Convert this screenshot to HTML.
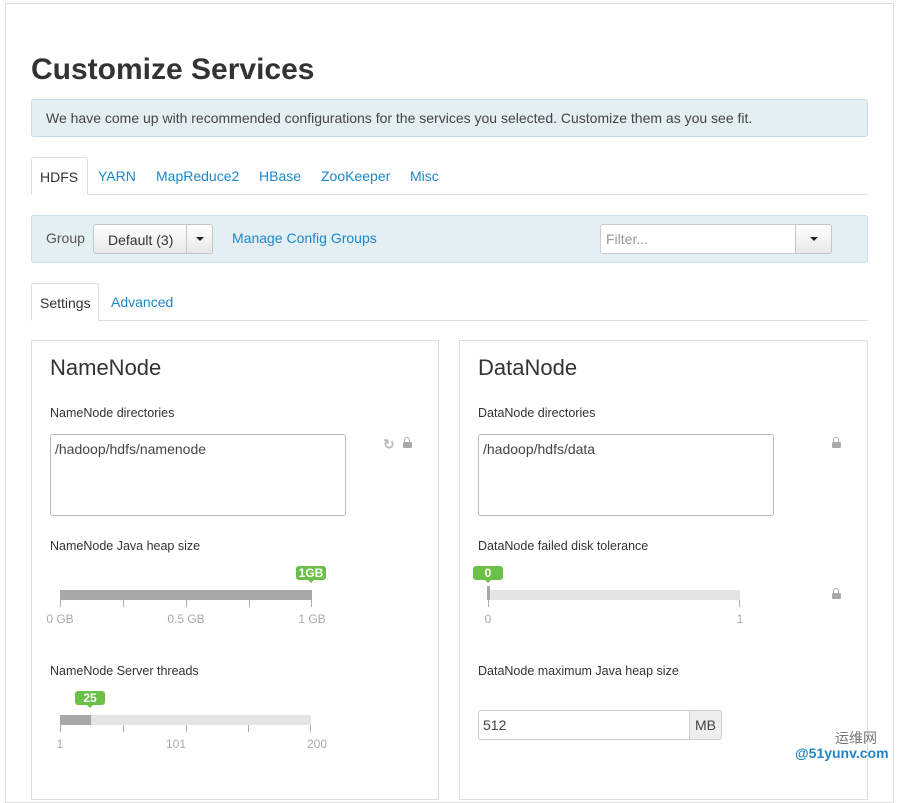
<!DOCTYPE html>
<html><head><meta charset="utf-8"><style>
*{box-sizing:border-box}
body{margin:0;width:900px;height:772px;overflow:hidden;background:#fff;font-family:"Liberation Sans",sans-serif;color:#333;position:relative}
.a{position:absolute;white-space:nowrap}
.frame{left:5px;top:3px;width:889px;height:800px;border:1px solid #ddd}
h1{position:absolute;left:31px;top:53px;margin:0;font-size:30px;font-weight:bold;color:#333}
.alert{left:31px;top:99px;width:837px;height:38px;background:#e4eff4;border:1px solid #c9dde7;border-radius:3px;font-size:14px;color:#444;padding:10px 14px}
.tabs{left:31px;top:194px;width:837px;border-top:1px solid #ddd}
.tab{position:absolute;font-size:14px;color:#1c87c9;white-space:nowrap}
.acttab{position:absolute;border:1px solid #ddd;border-bottom:1px solid #fff;background:#fff;border-radius:3px 3px 0 0;font-size:14px;color:#333}
.bar{left:31px;top:215px;width:837px;height:48px;background:#e4eff4;border:1px solid #cfdfe7;border-radius:3px}
.btn{position:absolute;border:1px solid #c6c6c6;border-radius:3px;background:linear-gradient(#fff,#e8e8e8);font-size:14px;color:#333;white-space:nowrap}
.caret{position:absolute;width:0;height:0;border-left:4px solid transparent;border-right:4px solid transparent;border-top:4px solid #222}
.panel{position:absolute;border:1px solid #ddd;top:340px;height:460px}
.ph{position:absolute;font-size:22px;color:#333}
.lbl{position:absolute;font-size:12.5px;color:#333;white-space:nowrap}
.ta{position:absolute;border:1px solid #bbb;border-radius:3px;width:296px;height:82px;font-size:14px;padding:6px 4px;color:#444}
.track{position:absolute;height:10px;background:#e4e4e4}
.fill{position:absolute;height:10px;background:#a8a8a8}
.tick{position:absolute;width:1px;height:7px;background:#aaa}
.num{position:absolute;font-size:12px;color:#aaa;transform:translateX(-50%)}
.badge{position:absolute;background:#6cbf48;color:#fff;font-size:12px;font-weight:bold;border-radius:3px;height:14px;line-height:14px;text-align:center}
.badge:after{content:"";position:absolute;left:50%;margin-left:-3px;bottom:-3px;border-left:3px solid transparent;border-right:3px solid transparent;border-top:3px solid #6cbf48}
.lock{position:absolute;width:9px;height:6px;background:#aaa;border-radius:1px}
.lock:before{content:"";position:absolute;left:1px;top:-5px;width:4px;height:5px;border:1.5px solid #aaa;border-bottom:none;border-radius:3px 3px 0 0}
</style></head><body>
<div class="a frame"></div>
<h1>Customize Services</h1>
<div class="a alert">We have come up with recommended configurations for the services you selected. Customize them as you see fit.</div>
<div class="a tabs"></div>
<div class="acttab" style="left:31px;top:157px;width:57px;height:38px;padding:11px 8px">HDFS</div>
<div class="tab" style="left:98px;top:168px">YARN</div>
<div class="tab" style="left:156px;top:168px">MapReduce2</div>
<div class="tab" style="left:259px;top:168px">HBase</div>
<div class="tab" style="left:321px;top:168px">ZooKeeper</div>
<div class="tab" style="left:410px;top:168px">Misc</div>
<div class="a bar"></div>
<div class="lbl" style="left:46px;top:230px;font-size:14px;color:#555">Group</div>
<div class="btn" style="left:93px;top:224px;width:94px;height:30px;padding:7px 0 0 14px;border-radius:3px 0 0 3px">Default (3)</div>
<div class="btn" style="left:186px;top:224px;width:27px;height:30px;border-radius:0 3px 3px 0"><div class="caret" style="left:9px;top:12px"></div></div>
<div class="tab" style="left:232px;top:230px">Manage Config Groups</div>
<div class="a" style="left:600px;top:224px;width:196px;height:30px;border:1px solid #ccc;border-radius:3px 0 0 3px;background:#fff;font-size:14px;color:#999;padding:6px 5px">Filter...</div>
<div class="btn" style="left:795px;top:224px;width:37px;height:30px;border-radius:0 3px 3px 0"><div class="caret" style="left:14px;top:12px"></div></div>
<div class="a" style="left:31px;top:320px;width:837px;border-top:1px solid #ddd"></div>
<div class="acttab" style="left:31px;top:283px;width:68px;height:38px;padding:11px 8px">Settings</div>
<div class="tab" style="left:111px;top:294px">Advanced</div>

<div class="panel" style="left:31px;width:408px"></div>
<div class="panel" style="left:459px;width:409px"></div>
<div class="ph" style="left:50px;top:355px">NameNode</div>
<div class="ph" style="left:478px;top:355px">DataNode</div>
<div class="lbl" style="left:50px;top:406px">NameNode directories</div>
<div class="lbl" style="left:478px;top:406px">DataNode directories</div>
<div class="ta" style="left:50px;top:434px">/hadoop/hdfs/namenode</div>
<div class="ta" style="left:478px;top:434px">/hadoop/hdfs/data</div>
<div class="a" style="left:383px;top:436px;font-size:14px;color:#bbb;font-weight:bold">&#x21bb;</div>
<div class="lock" style="left:403px;top:442px"></div>
<div class="lock" style="left:832px;top:442px"></div>

<div class="lbl" style="left:50px;top:539px">NameNode Java heap size</div>
<div class="fill" style="left:60px;top:590px;width:252px"></div>
<div class="tick" style="left:60px;top:600px"></div><div class="tick" style="left:123px;top:600px"></div><div class="tick" style="left:186px;top:600px"></div><div class="tick" style="left:249px;top:600px"></div><div class="tick" style="left:311px;top:600px"></div>
<div class="badge" style="left:296px;top:566px;width:30px">1GB</div>
<div class="num" style="left:60px;top:612px">0 GB</div>
<div class="num" style="left:186px;top:612px">0.5 GB</div>
<div class="num" style="left:312px;top:612px">1 GB</div>

<div class="lbl" style="left:50px;top:664px">NameNode Server threads</div>
<div class="track" style="left:60px;top:715px;width:251px"></div>
<div class="fill" style="left:60px;top:715px;width:31px"></div>
<div class="tick" style="left:60px;top:725px"></div><div class="tick" style="left:123px;top:725px"></div><div class="tick" style="left:186px;top:725px"></div><div class="tick" style="left:248px;top:725px"></div><div class="tick" style="left:310px;top:725px"></div>
<div class="badge" style="left:75px;top:691px;width:30px">25</div>
<div class="num" style="left:60px;top:737px">1</div>
<div class="num" style="left:176px;top:737px">101</div>
<div class="num" style="left:317px;top:737px">200</div>

<div class="lbl" style="left:478px;top:539px">DataNode failed disk tolerance</div>
<div class="track" style="left:488px;top:590px;width:252px"></div>
<div class="fill" style="left:487px;top:586px;width:3px;height:14px"></div>
<div class="tick" style="left:488px;top:600px"></div><div class="tick" style="left:739px;top:600px"></div>
<div class="badge" style="left:473px;top:566px;width:30px">0</div>
<div class="num" style="left:488px;top:612px">0</div>
<div class="num" style="left:740px;top:612px">1</div>
<div class="lock" style="left:832px;top:593px"></div>

<div class="lbl" style="left:478px;top:664px">DataNode maximum Java heap size</div>
<div class="a" style="left:478px;top:710px;width:212px;height:30px;border:1px solid #ccc;border-radius:3px 0 0 3px;font-size:14px;padding:6px 4px;color:#444">512</div>
<div class="a" style="left:689px;top:710px;width:33px;height:30px;border:1px solid #ccc;border-radius:0 3px 3px 0;background:#eee;font-size:14px;padding:6px 5px;color:#444">MB</div>
<div class="a" style="left:835px;top:728px;font-size:14px;color:#777;font-family:'Noto Sans CJK SC',sans-serif">运维网</div>
<div class="a" style="left:795px;top:745px;font-size:14px;color:#1c87c9;font-weight:bold">@51yunv.com</div>
</body></html>
